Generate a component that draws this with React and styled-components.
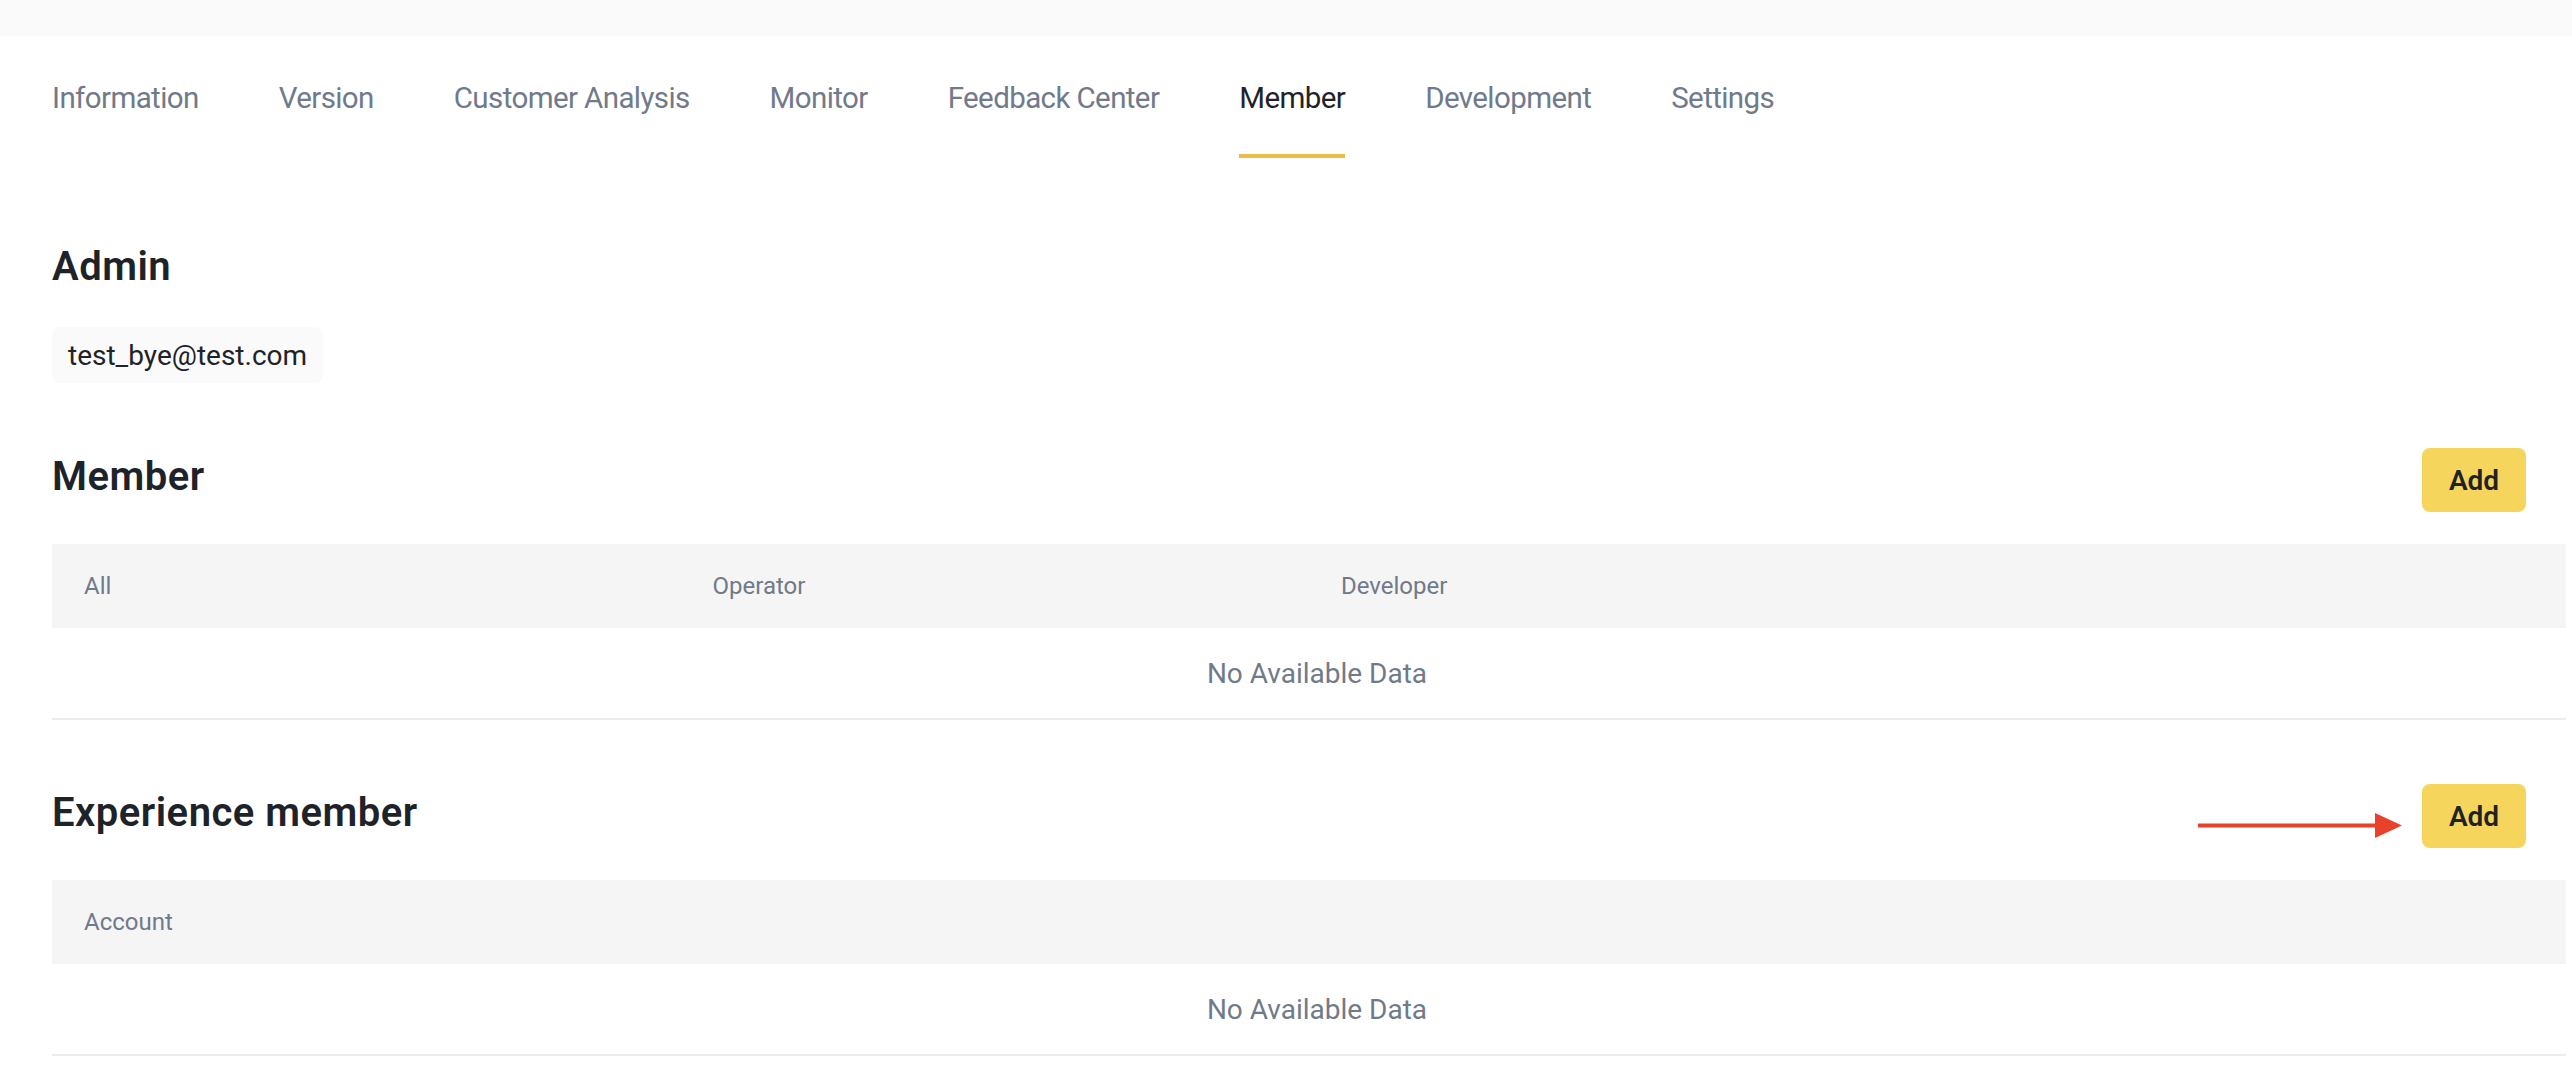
import React from 'react';
import styled, { createGlobalStyle } from 'styled-components';

const GlobalStyle = createGlobalStyle`
  body {
    margin: 0;
    background: #fff;
    font-family: Roboto, "Liberation Sans", Arial, sans-serif;
    color: #1e2329;
  }
`;

const TopBar = styled.div`
  height: 36px;
  background: #fafafa;
`;

const TabBar = styled.nav`
  display: flex;
  gap: 80px;
  padding: 38px 0 0 52px;
`;

const Tab = styled.div`
  font-size: 29.5px;
  letter-spacing: -0.6px;
  line-height: 48px;
  padding-bottom: 32px;
  color: ${(p) => (p.active ? '#1e2329' : '#707a8a')};
  border-bottom: 4px solid ${(p) => (p.active ? '#e9bd47' : 'transparent')};
  cursor: pointer;
`;

const Content = styled.main`
  padding: 0 6px 0 52px;
`;

const Heading = styled.h2`
  margin: 0;
  font-size: 40px;
  letter-spacing: 0.5px;
  line-height: 48px;
  font-weight: 600;
  color: #1e2329;
`;

const AdminBlock = styled.section`
  margin-top: 85px;
`;

const Chip = styled.div`
  display: inline-flex;
  align-items: center;
  height: 56px;
  margin-top: 36px;
  padding: 0 16px;
  background: #fafafa;
  border-radius: 8px;
  font-size: 28px;
`;

const Section = styled.section`
  margin-top: ${(p) => p.gap}px;
`;

const SectionHead = styled.div`
  position: relative;
  display: flex;
  justify-content: space-between;
  align-items: flex-start;
  padding-right: 40px;

  ${Heading} {
    padding-top: 5px;
  }
`;

const AddButton = styled.button`
  width: 104px;
  height: 64px;
  border: none;
  border-radius: 8px;
  background: #f6d55c;
  color: #1e2329;
  font-family: inherit;
  font-size: 28px;
  font-weight: 600;
  cursor: pointer;
`;

const Arrow = styled.svg`
  position: absolute;
  right: 164px;
  top: 29px;
`;

const Table = styled.div`
  margin-top: 32px;
  border-bottom: 2px solid #eaecef;
`;

const HeadRow = styled.div`
  display: grid;
  grid-template-columns: repeat(${(p) => p.cols}, 1fr);
  height: 84px;
  align-items: center;
  background: #f5f5f5;
`;

const HeadCell = styled.div`
  padding-left: 32px;
  font-size: 24px;
  color: #707a8a;
`;

const Empty = styled.div`
  height: 90px;
  display: flex;
  align-items: center;
  justify-content: center;
  padding-left: 16px;
  font-size: 28px;
  color: #707a8a;
`;

const tabs = [
  'Information',
  'Version',
  'Customer Analysis',
  'Monitor',
  'Feedback Center',
  'Member',
  'Development',
  'Settings',
];

const MemberTable = ({ columns, cols }) => (
  <Table>
    <HeadRow cols={cols}>
      {columns.map((c, i) => (
        <HeadCell key={i}>{c}</HeadCell>
      ))}
    </HeadRow>
    <Empty>No Available Data</Empty>
  </Table>
);

export default function App() {
  return (
    <>
      <GlobalStyle />
      <TopBar />
      <TabBar>
        {tabs.map((t) => (
          <Tab key={t} active={t === 'Member'}>
            {t}
          </Tab>
        ))}
      </TabBar>
      <Content>
        <AdminBlock>
          <Heading>Admin</Heading>
          <Chip>test_bye@test.com</Chip>
        </AdminBlock>

        <Section gap={65}>
          <SectionHead>
            <Heading>Member</Heading>
            <AddButton>Add</AddButton>
          </SectionHead>
          <MemberTable cols={4} columns={['All', 'Operator', 'Developer', '']} />
        </Section>

        <Section gap={64}>
          <SectionHead>
            <Heading>Experience member</Heading>
            <Arrow width="204" height="26" viewBox="0 0 204 26">
              <line x1="0" y1="12.5" x2="180" y2="12.5" stroke="#e8432a" strokeWidth="4" />
              <polygon points="177,0 204,12.5 177,25" fill="#e8432a" />
            </Arrow>
            <AddButton>Add</AddButton>
          </SectionHead>
          <MemberTable cols={1} columns={['Account']} />
        </Section>
      </Content>
    </>
  );
}
